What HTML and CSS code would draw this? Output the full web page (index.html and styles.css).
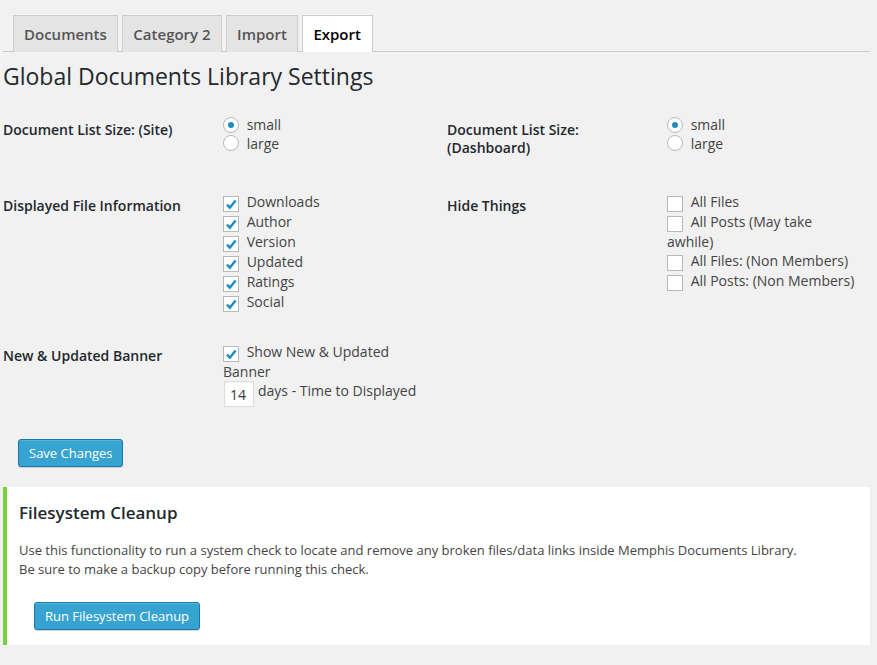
FILE: index.html
```html
<!DOCTYPE html>
<html lang="en">
<head>
<meta charset="utf-8">
<title>Global Documents Library Settings</title>
<link rel="stylesheet" href="styles.css">
</head>
<body>
<div class="wrap">
  <nav class="tabs">
    <a class="tab">Documents</a>
    <a class="tab">Category 2</a>
    <a class="tab">Import</a>
    <a class="tab active">Export</a>
  </nav>

  <h2 class="title">Global Documents Library Settings</h2>

  <div class="settings">
    <div class="th">Document List Size: (Site)</div>
    <div class="td c2 radios">
      <label class="opt"><svg class="rd" viewBox="0 0 16 16"><circle cx="8" cy="8" r="7.5" fill="#fff" stroke="#b4b9be"/><circle cx="8" cy="8" r="3" fill="#1e8cbe"/></svg> small</label>
      <label class="opt"><svg class="rd" viewBox="0 0 16 16"><circle cx="8" cy="8" r="7.5" fill="#fff" stroke="#b4b9be"/></svg> large</label>
    </div>
    <div class="th">Document List Size: (Dashboard)</div>
    <div class="td radios">
      <label class="opt"><svg class="rd" viewBox="0 0 16 16"><circle cx="8" cy="8" r="7.5" fill="#fff" stroke="#b4b9be"/><circle cx="8" cy="8" r="3" fill="#1e8cbe"/></svg> small</label>
      <label class="opt"><svg class="rd" viewBox="0 0 16 16"><circle cx="8" cy="8" r="7.5" fill="#fff" stroke="#b4b9be"/></svg> large</label>
    </div>

    <div class="th">Displayed File Information</div>
    <div class="td c2">
      <label class="opt"><svg class="cb" viewBox="0 0 16 16"><rect x="0.5" y="0.5" width="15" height="15" fill="#fff" stroke="#b4b9be"/><polyline points="4,8.6 6.9,11.6 12.6,4.6" fill="none" stroke="#1e8cbe" stroke-width="2.4"/></svg> Downloads</label>
      <label class="opt"><svg class="cb" viewBox="0 0 16 16"><rect x="0.5" y="0.5" width="15" height="15" fill="#fff" stroke="#b4b9be"/><polyline points="4,8.6 6.9,11.6 12.6,4.6" fill="none" stroke="#1e8cbe" stroke-width="2.4"/></svg> Author</label>
      <label class="opt"><svg class="cb" viewBox="0 0 16 16"><rect x="0.5" y="0.5" width="15" height="15" fill="#fff" stroke="#b4b9be"/><polyline points="4,8.6 6.9,11.6 12.6,4.6" fill="none" stroke="#1e8cbe" stroke-width="2.4"/></svg> Version</label>
      <label class="opt"><svg class="cb" viewBox="0 0 16 16"><rect x="0.5" y="0.5" width="15" height="15" fill="#fff" stroke="#b4b9be"/><polyline points="4,8.6 6.9,11.6 12.6,4.6" fill="none" stroke="#1e8cbe" stroke-width="2.4"/></svg> Updated</label>
      <label class="opt"><svg class="cb" viewBox="0 0 16 16"><rect x="0.5" y="0.5" width="15" height="15" fill="#fff" stroke="#b4b9be"/><polyline points="4,8.6 6.9,11.6 12.6,4.6" fill="none" stroke="#1e8cbe" stroke-width="2.4"/></svg> Ratings</label>
      <label class="opt"><svg class="cb" viewBox="0 0 16 16"><rect x="0.5" y="0.5" width="15" height="15" fill="#fff" stroke="#b4b9be"/><polyline points="4,8.6 6.9,11.6 12.6,4.6" fill="none" stroke="#1e8cbe" stroke-width="2.4"/></svg> Social</label>
    </div>
    <div class="th">Hide Things</div>
    <div class="td">
      <label class="opt"><svg class="cb" viewBox="0 0 16 16"><rect x="0.5" y="0.5" width="15" height="15" fill="#fff" stroke="#b4b9be"/></svg> All Files</label>
      <label class="opt"><svg class="cb" viewBox="0 0 16 16"><rect x="0.5" y="0.5" width="15" height="15" fill="#fff" stroke="#b4b9be"/></svg> All Posts (May take awhile)</label>
      <label class="opt"><svg class="cb" viewBox="0 0 16 16"><rect x="0.5" y="0.5" width="15" height="15" fill="#fff" stroke="#b4b9be"/></svg> All Files: (Non Members)</label>
      <label class="opt"><svg class="cb" viewBox="0 0 16 16"><rect x="0.5" y="0.5" width="15" height="15" fill="#fff" stroke="#b4b9be"/></svg> All Posts: (Non Members)</label>
    </div>

    <div class="th">New &amp; Updated Banner</div>
    <div class="td c2">
      <label class="opt"><svg class="cb" viewBox="0 0 16 16"><rect x="0.5" y="0.5" width="15" height="15" fill="#fff" stroke="#b4b9be"/><polyline points="4,8.6 6.9,11.6 12.6,4.6" fill="none" stroke="#1e8cbe" stroke-width="2.4"/></svg> Show New &amp; Updated Banner</label>
      <div class="days">
        <input class="num" type="text" value="14">
        <span>days - Time to Displayed</span>
      </div>
    </div>
  </div>

  <div class="submit first">
    <button class="btn" type="button">Save Changes</button>
  </div>

  <div class="notice">
    <h3 class="notice-title">Filesystem Cleanup</h3>
    <p class="notice-text">Use this functionality to run a system check to locate and remove any broken files/data links inside Memphis Documents Library.<br>Be sure to make a backup copy before running this check.</p>
    <div class="submit inner">
      <button class="btn" type="button">Run Filesystem Cleanup</button>
    </div>
  </div>
</div>
</body>
</html>
```
FILE: styles.css
```css
html, body {
  margin: 0;
  background: #f1f1f1;
}
body {
  font-family: "Open Sans", "DejaVu Sans", sans-serif;
  font-size: 13px;
  color: #444;
}
.wrap {
  margin: 0 7px 0 3px;
  padding-top: 15px;
}

/* tabs */
.tabs {
  display: flex;
  align-items: flex-end;
  gap: 4px;
  padding-left: 10px;
  border-bottom: 1px solid #ccc;
}
.tab {
  border: 1px solid #ccc;
  border-bottom: 0;
  background: #e4e4e4;
  color: #555;
  font-size: 15px;
  font-weight: 600;
  line-height: 24px;
  padding: 6px 10px;
  margin-bottom: -1px;
  cursor: pointer;
}
.tab + .tab {
  margin-left: 0.5px;
}
.tab.active {
  background: #fff;
  color: #000;
  padding: 6px 11px 6px 10px;
}

.title {
  margin: 10px 0 0;
  font-size: 23px;
  font-weight: 400;
  line-height: 29px;
  color: #23282d;
}

/* settings grid */
.settings {
  display: grid;
  grid-template-columns: 219px 225px 220px 203px;
  margin-top: 10px;
}
.th {
  padding: 20px 10px 20px 0;
  font-size: 14px;
  font-weight: 600;
  line-height: 18.2px;
  color: #23282d;
}
.td {
  padding: 15px 10px 15px 0;
  font-size: 14px;
  line-height: 19px;
  color: #444;
}
.td.c2 {
  padding-left: 1px;
  padding-right: 19px;
}
.td.radios {
  line-height: 18.5px;
}
.opt {
  display: block;
}
.cb, .rd {
  width: 16px;
  height: 16px;
  margin-right: 4px;
}
.cb {
  vertical-align: -5px;
}
.rd {
  vertical-align: -2.5px;
}

.days {
  display: flex;
  align-items: flex-start;
  gap: 4px;
}
.num {
  box-sizing: border-box;
  width: 30px;
  height: 26px;
  margin: 0 0 0 1px;
  padding: 3px 5px;
  border: 1px solid #ddd;
  background: #fff;
  box-shadow: inset 0 1px 2px rgba(0, 0, 0, .07);
  font-family: "Open Sans", sans-serif;
  font-size: 14px;
  color: #32373c;
  outline: none;
}

/* buttons */
.submit {
  padding-left: 15px;
}
.submit.first {
  margin-top: 17px;
}
.submit.inner {
  margin-top: 23px;
}
.btn {
  box-sizing: border-box;
  height: 28px;
  margin: 0;
  padding: 0 10px 1px;
  font-family: "Open Sans", sans-serif;
  font-size: 13px;
  line-height: 26px;
  color: #fff;
  background: #37a3d0;
  border: 1px solid #1a78a8;
  border-radius: 3px;
  box-shadow: inset 0 1px 0 rgba(120, 200, 230, .5), 0 1px 0 rgba(0, 0, 0, .15);
  cursor: pointer;
}

/* notice */
.notice {
  margin-top: 20px;
  background: #fff;
  border-left: 4px solid #7ad03a;
  box-shadow: 0 1px 1px 0 rgba(0, 0, 0, .1);
  padding: 1px 12px 15px;
}
.notice-title {
  margin: 13px 0 0;
  font-size: 17px;
  font-weight: 600;
  line-height: 23px;
  color: #23282d;
}
.notice-text {
  margin: 16.5px 0 0;
  font-size: 13px;
  line-height: 19px;
  color: #444;
}
```
